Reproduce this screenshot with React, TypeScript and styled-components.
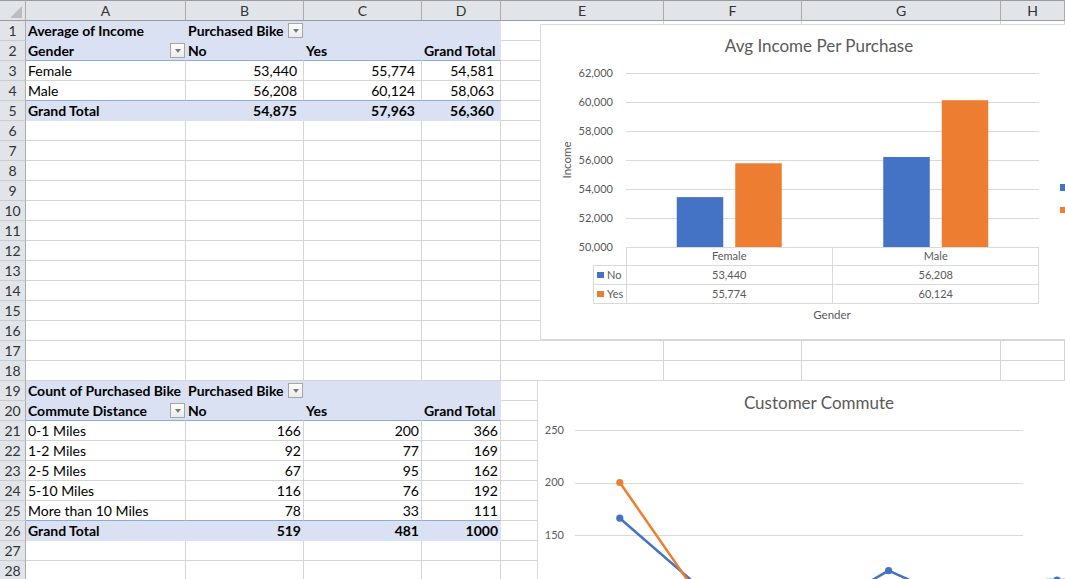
import React from 'react';
import styled, { createGlobalStyle } from 'styled-components';

const Global = createGlobalStyle`
  html, body { margin: 0; padding: 0; background: #fff; overflow: hidden; }
  body { font-family: Lato, "Liberation Sans", sans-serif; }
`;

const FONT = 'Lato, "Liberation Sans", sans-serif';
const PIVOT_FILL = '#D9E1F2';
const PIVOT_LINE = '#8EA9DB';
const GRID = '#D4D4D4';
const HEAD_BG = '#E1E4E9';

const Sheet = styled.div`
  position: relative;
  width: 1065px;
  height: 579px;
  overflow: hidden;
`;

const Grid = styled.div`
  display: grid;
  grid-template-columns: 26px 160px 118px 118px 79px 163px 138px 199px 64px;
  grid-template-rows: 21px;
  grid-auto-rows: 20px;
  font-family: ${FONT};
  font-size: 14px;
`;

const Corner = styled.div`
  position: relative;
  box-sizing: border-box;
  background: ${HEAD_BG};
  border-top: 1px solid #9B9B9B;
  border-right: 1px solid #ABABAB;
  border-bottom: 1px solid #9B9B9B;
  &::after {
    content: '';
    position: absolute;
    right: 3px;
    bottom: 2px;
    width: 12px;
    height: 12px;
    background: #B9BCC1;
    clip-path: polygon(100% 0, 100% 100%, 0 100%);
  }
`;

const ColHead = styled.div`
  box-sizing: border-box;
  background: ${HEAD_BG};
  border-top: 1px solid #9B9B9B;
  border-right: 1px solid #ABABAB;
  border-bottom: 1px solid #9B9B9B;
  display: flex;
  align-items: center;
  justify-content: center;
  color: #333;
  line-height: 19px;
`;

const RowHead = styled.div`
  box-sizing: border-box;
  background: ${HEAD_BG};
  border-right: 1px solid #ABABAB;
  border-bottom: 1px solid #C9CCD1;
  display: flex;
  align-items: center;
  justify-content: center;
  color: #333;
  line-height: 19px;
`;

const Cell = styled.div<{
  $fill?: boolean;
  $bold?: boolean;
  $right?: boolean;
  $blue?: boolean;
  $pr: number;
}>`
  box-sizing: border-box;
  display: flex;
  align-items: center;
  justify-content: ${(p) => (p.$right ? 'flex-end' : 'space-between')};
  padding: 0 ${(p) => p.$pr}px 0 2px;
  background: ${(p) => (p.$fill ? PIVOT_FILL : '#fff')};
  border-right: 1px solid ${(p) => (p.$fill ? PIVOT_FILL : GRID)};
  border-bottom: 1px solid
    ${(p) => (p.$blue ? PIVOT_LINE : p.$fill ? PIVOT_FILL : GRID)};
  font-weight: ${(p) => (p.$bold ? 700 : 400)};
  line-height: 19px;
  white-space: nowrap;
  color: #000;
  min-width: 0;
`;

const CellText = styled.span`
  display: block;
`;

const DropBtn = styled.span`
  box-sizing: border-box;
  flex: none;
  width: 15px;
  height: 15px;
  border: 1px solid #A6A6A6;
  background: linear-gradient(#fdfdfd, #ececec);
  display: flex;
  align-items: center;
  justify-content: center;
  &::after {
    content: '';
    width: 0;
    height: 0;
    border-left: 3.5px solid transparent;
    border-right: 3.5px solid transparent;
    border-top: 4px solid #7a7a7a;
  }
`;

const ChartBox = styled.div<{ $left: number; $top: number; $h: number }>`
  position: absolute;
  left: ${(p) => p.$left}px;
  top: ${(p) => p.$top}px;
  width: 560px;
  height: ${(p) => p.$h}px;
  box-sizing: border-box;
  background: #fff;
  border: 1px solid #D9D9D9;
`;

const ChartSvg = styled.svg`
  display: block;
  text {
    font-family: ${FONT};
    fill: #595959;
  }
`;

interface CellSpec {
  t?: string;
  b?: boolean;
  r?: boolean;
  f?: boolean;
  bl?: boolean;
  dd?: boolean;
  pr?: number;
}

const hd = (t: string, extra: Partial<CellSpec> = {}): CellSpec => ({ t, b: true, f: true, ...extra });
const num = (t: string, pr: number, extra: Partial<CellSpec> = {}): CellSpec => ({ t, r: true, pr, ...extra });

const P1 = 6;
const P2 = 2;

const PIVOT: Record<number, CellSpec[]> = {
  1: [hd('Average of Income'), hd('Purchased Bike', { dd: true, pr: 0 }), hd(''), hd('')],
  2: [
    hd('Gender', { dd: true, pr: 0, bl: true }),
    hd('No', { bl: true }),
    hd('Yes', { bl: true }),
    hd('Grand Total', { bl: true }),
  ],
  3: [{ t: 'Female' }, num('53,440', P1), num('55,774', P1), num('54,581', P1)],
  4: [
    { t: 'Male', bl: true },
    num('56,208', P1, { bl: true }),
    num('60,124', P1, { bl: true }),
    num('58,063', P1, { bl: true }),
  ],
  5: [
    hd('Grand Total'),
    num('54,875', P1, { b: true, f: true }),
    num('57,963', P1, { b: true, f: true }),
    num('56,360', P1, { b: true, f: true }),
  ],
  19: [hd('Count of Purchased Bike'), hd('Purchased Bike', { dd: true, pr: 0 }), hd(''), hd('')],
  20: [
    hd('Commute Distance', { dd: true, pr: 0, bl: true }),
    hd('No', { bl: true }),
    hd('Yes', { bl: true }),
    hd('Grand Total', { bl: true }),
  ],
  21: [{ t: '0-1 Miles' }, num('166', P2), num('200', P2), num('366', P2)],
  22: [{ t: '1-2 Miles' }, num('92', P2), num('77', P2), num('169', P2)],
  23: [{ t: '2-5 Miles' }, num('67', P2), num('95', P2), num('162', P2)],
  24: [{ t: '5-10 Miles' }, num('116', P2), num('76', P2), num('192', P2)],
  25: [
    { t: 'More than 10 Miles', bl: true },
    num('78', P2, { bl: true }),
    num('33', P2, { bl: true }),
    num('111', P2, { bl: true }),
  ],
  26: [
    hd('Grand Total'),
    num('519', P2, { b: true, f: true }),
    num('481', P2, { b: true, f: true }),
    num('1000', P2, { b: true, f: true }),
  ],
};

const LETTERS = ['A', 'B', 'C', 'D', 'E', 'F', 'G', 'H'];

const BLUE = '#4472C4';
const ORANGE = '#ED7D31';
const GRIDLINE = '#D9D9D9';
const AX = 11;

function IncomeChart() {
  const yFor = (v: number) => 247 - ((v - 50000) / 2000) * 29;
  const ticks = [62000, 60000, 58000, 56000, 54000, 52000, 50000];
  const cats = [
    { name: 'Female', c: 729.25, no: 53440, yes: 55774 },
    { name: 'Male', c: 935.75, no: 56208, yes: 60124 },
  ];
  const fmt = (v: number) => v.toLocaleString('en-US');
  return (
    <ChartBox $left={540} $top={24} $h={316}>
      <ChartSvg width={558} height={314} viewBox="541 25 558 314">
        <text x={819} y={52} fontSize={17} textAnchor="middle">
          Avg Income Per Purchase
        </text>
        {ticks.map((t) => (
          <g key={t}>
            {t !== 50000 && (
              <line x1={626} x2={1039} y1={yFor(t) + 0.5} y2={yFor(t) + 0.5} stroke={GRIDLINE} />
            )}
            <text x={613} y={yFor(t) + 3.5} fontSize={AX} textAnchor="end">
              {fmt(t)}
            </text>
          </g>
        ))}
        <text x={571} y={160} fontSize={11.5} textAnchor="middle" transform="rotate(-90 571 160)">
          Income
        </text>
        {cats.map((c) => (
          <g key={c.name}>
            <rect x={c.c - 52.5} y={yFor(c.no)} width={46.5} height={247 - yFor(c.no)} fill={BLUE} />
            <rect x={c.c + 6} y={yFor(c.yes)} width={46.5} height={247 - yFor(c.yes)} fill={ORANGE} />
            <text x={c.c} y={260} fontSize={AX} textAnchor="middle">
              {c.name}
            </text>
            <text x={c.c} y={278.5} fontSize={AX} textAnchor="middle">
              {fmt(c.no)}
            </text>
            <text x={c.c} y={297.5} fontSize={AX} textAnchor="middle">
              {fmt(c.yes)}
            </text>
          </g>
        ))}
        <line x1={626} x2={1039} y1={247.5} y2={247.5} stroke={GRIDLINE} />
        <line x1={593} x2={1039} y1={265.5} y2={265.5} stroke={GRIDLINE} />
        <line x1={593} x2={1039} y1={284.5} y2={284.5} stroke={GRIDLINE} />
        <line x1={593} x2={1039} y1={303.5} y2={303.5} stroke={GRIDLINE} />
        <line x1={593.5} x2={593.5} y1={265.5} y2={303.5} stroke={GRIDLINE} />
        <line x1={626.5} x2={626.5} y1={247.5} y2={303.5} stroke={GRIDLINE} />
        <line x1={832.5} x2={832.5} y1={247.5} y2={303.5} stroke={GRIDLINE} />
        <line x1={1038.5} x2={1038.5} y1={247.5} y2={303.5} stroke={GRIDLINE} />
        <rect x={597} y={272} width={7} height={6} fill={BLUE} />
        <text x={607} y={278.5} fontSize={AX}>
          No
        </text>
        <rect x={597} y={291} width={7} height={6} fill={ORANGE} />
        <text x={607} y={297.5} fontSize={AX}>
          Yes
        </text>
        <text x={832} y={319} fontSize={11.5} textAnchor="middle">
          Gender
        </text>
        <rect x={1060} y={184} width={7} height={7} fill={BLUE} />
        <rect x={1060} y={207} width={7} height={6} fill={ORANGE} />
      </ChartSvg>
    </ChartBox>
  );
}

function CommuteChart() {
  const yFor = (v: number) => 535 - ((v - 150) / 50) * 52.5;
  const xFor = (i: number) => 575 + 89.6 * (i + 0.5);
  const no = [166, 92, 67, 116, 78];
  const yes = [200, 77, 95, 76, 33];
  const pts = (arr: number[]) => arr.map((v, i) => `${xFor(i)},${yFor(v)}`).join(' ');
  const ticks = [250, 200, 150];
  return (
    <ChartBox $left={537} $top={380} $h={230}>
      <ChartSvg width={558} height={228} viewBox="538 381 558 228">
        <text x={819} y={409} fontSize={17} textAnchor="middle">
          Customer Commute
        </text>
        {ticks.map((t) => (
          <g key={t}>
            <line x1={575} x2={1023} y1={Math.round(yFor(t)) + 0.5} y2={Math.round(yFor(t)) + 0.5} stroke={GRIDLINE} />
            <text x={564} y={yFor(t) + 3.5} fontSize={AX} textAnchor="end">
              {t}
            </text>
          </g>
        ))}
        <line x1={575} x2={1023} y1={588} y2={588} stroke={GRIDLINE} />
        {[
          { arr: no, color: BLUE },
          { arr: yes, color: ORANGE },
        ].map((s) => (
          <g key={s.color}>
            <polyline
              points={pts(s.arr)}
              fill="none"
              stroke={s.color}
              strokeWidth={2.5}
              strokeLinejoin="round"
              strokeLinecap="round"
            />
            {s.arr.map((v, i) => (
              <circle key={i} cx={xFor(i)} cy={yFor(v)} r={3.6} fill={s.color} />
            ))}
          </g>
        ))}
        <line x1={1046} x2={1068} y1={580} y2={580} stroke={BLUE} strokeWidth={2.5} />
        <circle cx={1057} cy={580} r={3.6} fill={BLUE} />
      </ChartSvg>
    </ChartBox>
  );
}

export default function App() {
  const cells: React.ReactNode[] = [];
  cells.push(<Corner key="corner" />);
  LETTERS.forEach((l) => cells.push(<ColHead key={'c' + l}>{l}</ColHead>));
  for (let r = 1; r <= 28; r++) {
    const spec = PIVOT[r] || [];
    cells.push(<RowHead key={'r' + r}>{r}</RowHead>);
    for (let c = 0; c < 8; c++) {
      const s = spec[c] || {};
      cells.push(
        <Cell
          key={r + '-' + c}
          $fill={s.f}
          $bold={s.b}
          $right={s.r}
          $blue={s.bl}
          $pr={s.pr ?? 2}
        >
          {s.t ? <CellText>{s.t}</CellText> : null}
          {s.dd ? <DropBtn /> : null}
        </Cell>
      );
    }
  }
  return (
    <>
      <Global />
      <Sheet>
        <Grid>{cells}</Grid>
        <IncomeChart />
        <CommuteChart />
      </Sheet>
    </>
  );
}
